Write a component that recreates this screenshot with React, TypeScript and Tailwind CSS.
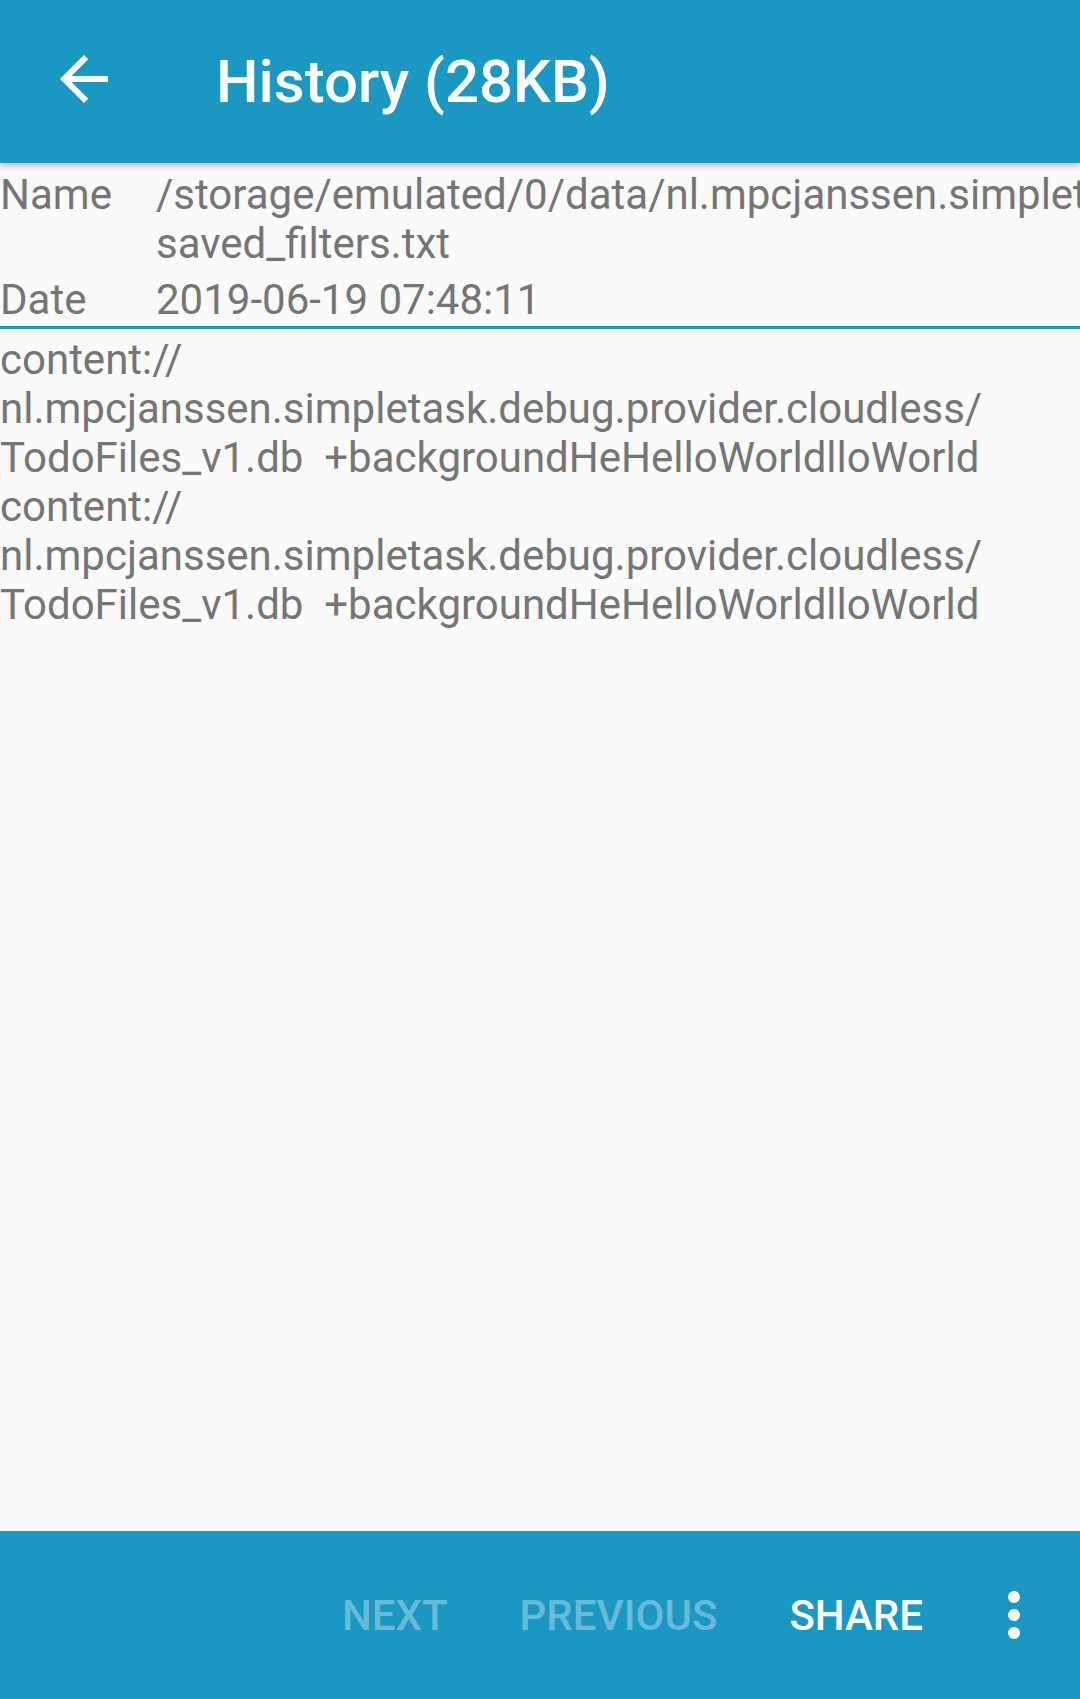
import React from "react";

const font = { fontFamily: "Roboto, 'Noto Sans', sans-serif" };

export default function App() {
  return (
    <div
      className="w-[1080px] h-[1699px] flex flex-col bg-[#fafafa] overflow-hidden"
      style={font}
    >
      {/* Top app bar */}
      <div className="relative z-10 h-[163px] shrink-0 bg-[#1b98c2] flex items-start shadow-[0_3px_6px_rgba(0,0,0,0.25)]">
        <svg
          viewBox="0 0 24 24"
          className="w-[72px] h-[72px] ml-[48px] mt-[43px] fill-white"
        >
          <path d="M20 11H7.83l5.59-5.59L12 4l-8 8 8 8 1.41-1.41L7.83 13H20v-2z" />
        </svg>
        <div className="ml-[96px] h-full flex items-center text-white text-[60px] font-medium leading-[70px]">
          History (28KB)
        </div>
      </div>

      {/* Body */}
      <div className="flex-1 flex flex-col text-[#757575] text-[42px] leading-[49px] overflow-hidden">
        <div className="flex pt-[7px]">
          <div className="w-[156px] shrink-0">Name</div>
          <div className="whitespace-nowrap">
            <div>/storage/emulated/0/data/nl.mpcjanssen.simpletask/</div>
            <div>saved_filters.txt</div>
          </div>
        </div>
        <div className="flex pt-[7px]">
          <div className="w-[156px] shrink-0">Date</div>
          <div className="whitespace-nowrap">2019-06-19 07:48:11</div>
        </div>
        <div className="mt-[2px] h-[3px] bg-[#1b98c2]" />
        <div className="pt-[6px] whitespace-pre">
          <div>content://</div>
          <div>nl.mpcjanssen.simpletask.debug.provider.cloudless/</div>
          <div>TodoFiles_v1.db  +backgroundHeHelloWorldlloWorld</div>
          <div>content://</div>
          <div>nl.mpcjanssen.simpletask.debug.provider.cloudless/</div>
          <div>TodoFiles_v1.db  +backgroundHeHelloWorldlloWorld</div>
        </div>
      </div>

      {/* Bottom bar */}
      <div className="h-[168px] shrink-0 bg-[#1b98c2] flex items-center justify-end pr-[11px] text-[42px] font-medium leading-[49px]">
        <span className="px-[36px] text-[#68bad8]">NEXT</span>
        <span className="px-[36px] text-[#68bad8]">PREVIOUS</span>
        <span className="px-[36px] text-white">SHARE</span>
        <div className="w-[110px] flex justify-center">
          <svg viewBox="0 0 24 24" className="w-[72px] h-[72px] fill-white">
            <circle cx="12" cy="6" r="2" />
            <circle cx="12" cy="12" r="2" />
            <circle cx="12" cy="18" r="2" />
          </svg>
        </div>
      </div>
    </div>
  );
}
